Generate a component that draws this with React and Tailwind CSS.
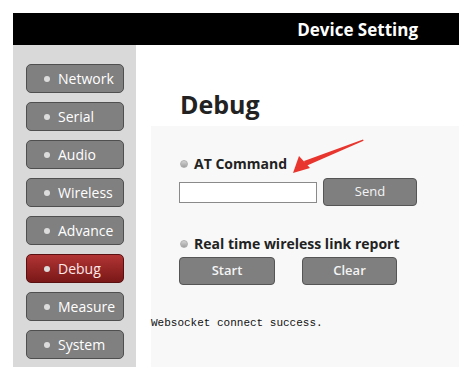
import React from "react";

const items = ["Network", "Serial", "Audio", "Wireless", "Advance", "Debug", "Measure", "System"];

function NavButton({ label, active }) {
  return (
    <div
      className={
        "h-[29px] w-[98px] rounded-[5px] border flex items-center pl-[17px] " +
        (active
          ? "border-[#5a1010] bg-gradient-to-b from-[#b23434] to-[#7a1818]"
          : "border-[#4f4f4f] bg-[#808080]")
      }
    >
      <span className="w-[6px] h-[6px] rounded-full bg-[#dcdcdc] mr-[8px]" />
      <span
        className={"text-[14px] leading-none " + (active ? "text-[#fde8e8]" : "text-white")}
        style={{ fontFamily: '"Open Sans", "Noto Sans", sans-serif' }}
      >
        {label}
      </span>
    </div>
  );
}

function Bullet() {
  return (
    <span className="w-[8px] h-[8px] rounded-full bg-gradient-to-b from-[#d4d4d4] to-[#a0a0a0] border border-[#b0b0b0] ml-[1px] mr-[6px]" />
  );
}

function GrayButton({ label, className = "", bold }) {
  return (
    <div
      className={
        "h-[28px] rounded-[4px] border border-[#555] bg-[#7f7f7f] flex items-center justify-center text-[13px] text-[#f4f4f4] " +
        (bold ? "font-semibold " : "") +
        className
      }
    >
      {label}
    </div>
  );
}

export default function App() {
  return (
    <div
      className="w-[464px] h-[382px] bg-white pt-[13px] pl-[13px] overflow-hidden"
      style={{ fontFamily: '"Open Sans", "Noto Sans", sans-serif' }}
    >
      <div className="w-[446px]">
        <div className="h-[32px] bg-black flex items-center justify-end pr-[41px]">
          <span className="text-white font-bold text-[17px] leading-none">Device Setting</span>
        </div>
        <div className="flex">
          <div className="w-[123px] h-[322px] bg-[#d9d9d9] flex flex-col gap-[9px] pt-[19px] pl-[13px]">
            {items.map((l) => (
              <NavButton key={l} label={l} active={l === "Debug"} />
            ))}
          </div>
          <div className="flex-1 relative">
            <div className="h-[81px] pl-[44px] pt-[44px]">
              <h1 className="text-[25px] leading-[30px] font-bold text-[#222]">Debug</h1>
            </div>
            <div className="ml-[15px] h-[241px] bg-[#f8f8f8]">
              <div className="pl-[28px] pt-[28px]">
                <div className="h-[20px] flex items-center">
                  <Bullet />
                  <span className="text-[14px] font-bold text-[#222] leading-[20px]">AT Command</span>
                </div>
                <div className="mt-[4px] h-[28px] flex items-center">
                  <input className="w-[138px] h-[21px] border border-[#8a8a8a] bg-white outline-none" />
                  <GrayButton label="Send" className="w-[94px] ml-[6px]" />
                </div>
                <div className="mt-[28px] h-[20px] flex items-center">
                  <Bullet />
                  <span className="text-[14px] font-bold text-[#222] leading-[20px]">
                    Real time wireless link report
                  </span>
                </div>
                <div className="mt-[3px] flex">
                  <GrayButton label="Start" bold className="w-[96px]" />
                  <GrayButton label="Clear" bold className="w-[95px] ml-[27px]" />
                </div>
              </div>
              <div
                className="mt-[30px] text-[11px] leading-[16px] text-[#111]"
                style={{ fontFamily: '"Liberation Mono", monospace' }}
              >
                Websocket connect success.
              </div>
            </div>
            <svg
              className="absolute left-0 top-0 pointer-events-none"
              width="323"
              height="200"
              viewBox="0 0 323 200"
            >
              <g transform="translate(-136,-45)">
                <polygon points="363,139.5 363.6,140.8 306,166 304,161" fill="#e8352d" />
                <polygon points="293,173 299,156 310,168" fill="#e8352d" />
              </g>
            </svg>
          </div>
        </div>
      </div>
    </div>
  );
}
